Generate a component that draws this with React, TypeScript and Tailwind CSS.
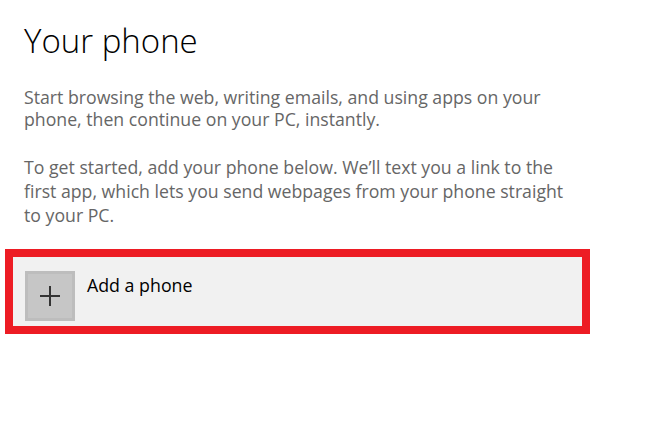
const App: React.FC = () => {
  return (
    <div className="h-[437px] w-[651px] bg-white font-['Open_Sans',sans-serif]">
      <div className="pl-6 pt-[19px]">
        <h1 className="text-[33px] leading-[44px] font-light text-black">Your phone</h1>
        <p className="mt-[23px] text-[17.7px] leading-[22px] text-[#666666]">
          Start browsing the web, writing emails, and using apps on your
          <br />
          phone, then continue on your PC, instantly.
        </p>
        <p className="mt-[25px] text-[17.7px] leading-[24px] text-[#666666]">
          To get started, add your phone below. We’ll text you a link to the
          <br />
          first app, which lets you send webpages from your phone straight
          <br />
          to your PC.
        </p>
      </div>

      <div className="mt-[22px] pl-[5px]">
        <div className="h-[85px] w-[585px] border-8 border-[#ed1c24] bg-[#f1f1f1]">
          <button className="flex items-start gap-3 pl-3 pt-[14px] text-left">
            <span className="flex size-[50px] items-center justify-center border-[3px] border-[#bdbdbd] bg-[#c6c6c6]">
              <svg width="20" height="20" viewBox="0 0 20 20">
                <path d="M10 0v20M0 10h20" stroke="#333" strokeWidth="2" />
              </svg>
            </span>
            <span className="pt-[2px] text-[17.8px] leading-[24px] text-black">Add a phone</span>
          </button>
        </div>
      </div>
    </div>
  )
}

export default App
